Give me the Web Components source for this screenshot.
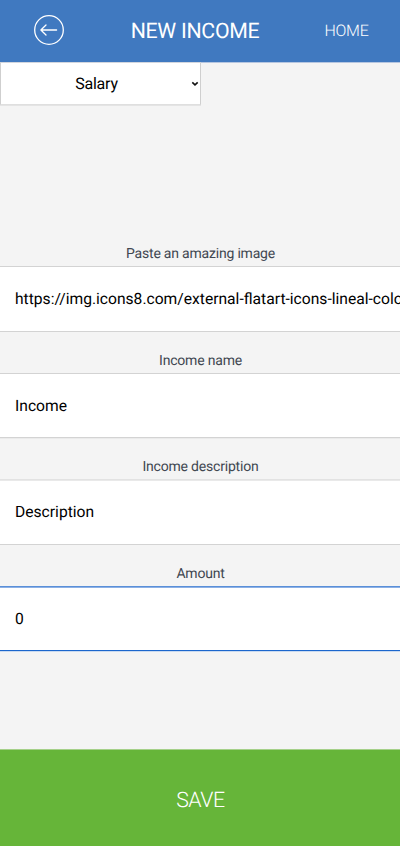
<!DOCTYPE html>
<html lang="en">
<head>
<meta charset="utf-8">
<title>New income</title>
<style>
html, body { margin: 0; padding: 0; background: #f4f4f4; }
body { width: 400px; height: 846px; overflow: hidden; font-family: Roboto, "Liberation Sans", sans-serif; text-rendering: geometricPrecision; }
</style>
</head>
<body>
<income-page></income-page>
<script>
const define = (name, html) => customElements.define(name, class extends HTMLElement {
  constructor() {
    super();
    this.attachShadow({ mode: 'open' }).innerHTML = html;
  }
});

define('page-header', `
<style>
:host { display: grid; grid-template-columns: 98px 194px 108px; align-items: center; height: 62px; box-sizing: border-box; background: #4079c0; color: #fff; box-shadow: 0 1px 0 #b6c6e0; }
svg { display: block; margin: -3px 0 0 33px; }
h1 { margin: 0; padding-top: 2px; font-size: 21.3px; letter-spacing: -0.3px; line-height: 24px; font-weight: 400; text-align: center; white-space: nowrap; }
a { font-size: 16px; letter-spacing: -0.3px; line-height: 20px; font-weight: 300; text-align: center; color: #fff; padding-left: 1px; }
</style>
<svg width="32" height="32" viewBox="0 0 32 32" fill="none" stroke="#fff" stroke-width="1.3" stroke-linecap="round" stroke-linejoin="round"><circle cx="16" cy="16" r="14.3"/><path d="M23.6 16H8M13 11L7.9 16L13 21"/></svg>
<h1><slot></slot></h1>
<a><slot name="link"></slot></a>`);

define('category-select', `
<style>
:host { display: grid; grid-template-columns: 1fr 10px; align-items: center; width: 201px; height: 43px; box-sizing: border-box; background: #fff; border: 1px solid #cfcfcf; border-bottom-color: #dfdfdf; border-top-color: #d2d6de; box-shadow: 0 1px 0 #e4e4e4; font-size: 16px; letter-spacing: -0.2px; color: #000; }
span { text-align: center; line-height: 20px; padding-left: 2px; }
svg { display: block; margin: 1px 0 0 1px; }
</style>
<span><slot></slot></span>
<svg width="8" height="6" viewBox="0 0 8 6" fill="none" stroke="#111" stroke-width="1.6"><path d="M1.3 1.3L4 3.8L6.7 1.3"/></svg>`);

define('form-field', `
<style>
:host { display: flex; flex-direction: column; min-width: 0; --edge: #d3d3d3; --edge-bottom: #d3d3d3; --soft-top: #fff; --soft-bottom: #f4f4f4; --size: 66px; }
:host([short]) { --size: 65px; --soft-bottom: #ebebeb; }
:host([soft]) { --edge: #e2e2e2; --soft-top: #e9e9e9; }
:host([focused]) { --size: 65px; --edge: #5a8fd8; --soft-top: #8db1e5; --edge-bottom: #1b66cc; --soft-bottom: #c9daf0; }
label { height: 26px; padding-left: 1px; font-size: 14px; letter-spacing: -0.2px; line-height: 28px; text-align: center; color: #414751; }
.value { height: var(--size); box-sizing: border-box; border-top: 1px solid var(--edge); border-bottom: 1px solid var(--edge-bottom); background: #fff; box-shadow: inset 0 1px 0 var(--soft-top), 0 1px 0 var(--soft-bottom); padding-left: 15px; font-size: 15.64px; line-height: 64px; color: #000; white-space: nowrap; overflow: hidden; }
</style>
<label><slot name="label"></slot></label>
<div class="value"><slot></slot></div>`);

define('save-button', `
<style>
:host { display: flex; align-items: center; justify-content: center; height: 97px; box-sizing: border-box; padding: 6px 0 0 1px; background: #66b539; border-top: 1px solid #a5d089; color: #fff; font-size: 21.3px; letter-spacing: -0.4px; font-weight: 300; line-height: 24px; }
</style>
<slot></slot>`);

define('income-page', `
<style>
:host { display: flex; flex-direction: column; width: 400px; height: 846px; overflow: hidden; background: #f4f4f4; }
.fields { display: grid; grid-template-columns: minmax(0, 1fr); grid-template-rows: 107px 106px 107px 106px; margin-top: 135px; }
save-button { margin-top: auto; }
</style>
<page-header>NEW INCOME<span slot="link">HOME</span></page-header>
<category-select>Salary</category-select>
<div class="fields">
<form-field><span slot="label">Paste an amazing image</span>https://img.icons8.com/external-flatart-icons-lineal-color</form-field>
<form-field short><span slot="label">Income name</span>Income</form-field>
<form-field soft><span slot="label">Income description</span>Description</form-field>
<form-field focused><span slot="label">Amount</span>0</form-field>
</div>
<save-button>SAVE</save-button>`);
</script>
</body>
</html>
